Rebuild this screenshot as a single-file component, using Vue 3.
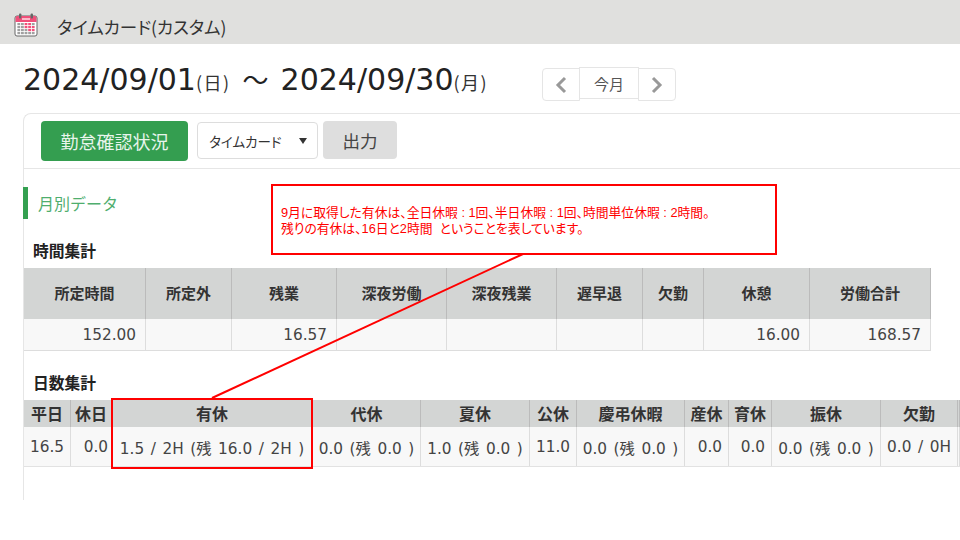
<script setup>
const timeCols = [
  { h: '所定時間', v: '152.00' }, { h: '所定外', v: '' }, { h: '残業', v: '16.57' },
  { h: '深夜労働', v: '' }, { h: '深夜残業', v: '' }, { h: '遅早退', v: '' },
  { h: '欠勤', v: '' }, { h: '休憩', v: '16.00' }, { h: '労働合計', v: '168.57' }
]
const dayCols = [
  { h: '平日', v: '16.5', cls: 'num' }, { h: '休日', v: '0.0', cls: 'num tight' },
  { h: '有休', v: '1.5 / 2H (残 16.0 / 2H )' }, { h: '代休', v: '0.0 (残 0.0 )' },
  { h: '夏休', v: '1.0 (残 0.0 )' }, { h: '公休', v: '11.0', cls: 'num' },
  { h: '慶弔休暇', v: '0.0 (残 0.0 )' }, { h: '産休', v: '0.0', cls: 'num' },
  { h: '育休', v: '0.0', cls: 'num' }, { h: '振休', v: '0.0 (残 0.0 )' },
  { h: '欠勤', v: '0.0 / 0H' }, { h: '', v: '' }
]
const calCells = [
  [0,0,1,1,0],[0,0,1,1,1],[0,0,0,1,1],[0,0,0,0,0]
]
</script>

<template>
  <div class="page">
    <header class="topbar">
      <svg class="cal" width="24" height="24" viewBox="0 0 24 24">
        <rect x="1" y="3" width="22" height="20" rx="2" fill="#fff" stroke="#666" stroke-width="1"/>
        <path d="M1.5 9V5a2 2 0 0 1 2-2h17a2 2 0 0 1 2 2v4z" fill="#f0507a"/>
        <rect x="5" y="0.5" width="2.4" height="5" rx="1" fill="#666"/>
        <rect x="16.6" y="0.5" width="2.4" height="5" rx="1" fill="#666"/>
        <rect x="8" y="5" width="8" height="2" fill="#fbb9c9"/>
        <template v-for="(row, r) in calCells" :key="r">
          <rect v-for="(c, i) in row" :key="i" :x="3.4 + i * 3.6" :y="10 + r * 3" width="2.8" height="2.2"
            :fill="c ? '#f0507a' : '#a0a0a0'"/>
        </template>
      </svg>
      <span class="apptitle">タイムカード(カスタム)</span>
    </header>

    <div class="range">
      <h1 class="dates">2024/09/01<small>(日)</small><span class="tilde">〜</span>2024/09/30<small>(月)</small></h1>
      <nav class="pager">
        <button class="pg side left" aria-label="前">
          <svg width="12" height="18" viewBox="0 0 12 18"><path d="M10 2 3 9l7 7" fill="none" stroke="#999" stroke-width="3"/></svg>
        </button>
        <button class="pg mid">今月</button>
        <button class="pg side right" aria-label="次">
          <svg width="12" height="18" viewBox="0 0 12 18"><path d="M2 2l7 7-7 7" fill="none" stroke="#999" stroke-width="3"/></svg>
        </button>
      </nav>
    </div>

    <section class="card">
      <div class="toolbar">
        <button class="btn-green">勤怠確認状況</button>
        <div class="select"><span>タイムカード</span><i class="caret"></i></div>
        <button class="btn-gray">出力</button>
      </div>

      <h2 class="section">月別データ</h2>

      <h3 class="sub first">時間集計</h3>
      <div class="grid time">
        <div v-for="c in timeCols" :key="c.h" class="th">{{ c.h }}</div>
        <div v-for="c in timeCols" :key="c.h + 'v'" class="td">{{ c.v }}</div>
      </div>

      <h3 class="sub second">日数集計</h3>
      <div class="grid days">
        <div v-for="(c, i) in dayCols" :key="i" class="th">{{ c.h }}</div>
        <div v-for="(c, i) in dayCols" :key="i + 'v'" class="td" :class="c.cls">{{ c.v }}</div>
      </div>
    </section>

    <svg class="leader" width="960" height="540" viewBox="0 0 960 540">
      <line x1="523" y1="254" x2="212" y2="398" stroke="#f00" stroke-width="2"/>
      <rect x="112" y="399" width="200" height="69" fill="none" stroke="#f00" stroke-width="2"/>
    </svg>
    <div class="note">
      <p>9月に取得した有休は、全日休暇 : 1回、半日休暇 : 1回、時間単位休暇 : 2時間。</p>
      <p>残りの有休は、16日と2時間&nbsp;&nbsp;ということを表しています。</p>
    </div>
  </div>
</template>

<style>
html, body { margin: 0; background: #fff; }
</style>

<style scoped>
.page {
  position: relative;
  width: 960px;
  height: 540px;
  overflow: hidden;
  background: #fff;
  color: #333;
  font-family: "DejaVu Sans", "Noto Sans CJK JP", sans-serif;
}
.topbar {
  height: 44px;
  background: #e0e0de;
  display: flex;
  align-items: center;
  padding-left: 14px;
  box-sizing: border-box;
}
.cal { flex: none; width: 24px; height: 24px; margin-top: 6px; }
.apptitle {
  margin-left: 19px;
  font: 400 17.5px "Noto Sans CJK JP", sans-serif;
  font-feature-settings: "palt";
  color: #333;
  padding-top: 8px;
}
.range {
  height: 69px;
  display: flex;
  align-items: flex-start;
  padding-left: 23px;
}
.dates {
  margin: 13px 0 0;
  font-size: 30px;
  line-height: 44px;
  font-weight: 400;
  color: #222;
  white-space: nowrap;
  width: 519px;
}
.dates small { font-size: 18px; color: #333; font-family: "Noto Sans CJK JP", sans-serif; letter-spacing: 1.5px; }
.tilde { font-family: "Noto Sans CJK JP", sans-serif; font-size: 26px; margin: 0 12px; }
.pager { display: flex; align-items: flex-start; margin-top: 23px; }
.pg {
  background: #fff;
  border: 1px solid #e5e5e5;
  padding: 0;
  display: flex;
  align-items: center;
  justify-content: center;
  box-sizing: border-box;
}
.side { width: 38px; height: 33px; margin-top: 1px; }
.left { border-radius: 4px 0 0 4px; }
.right { border-radius: 0 4px 4px 0; margin-left: -1px; }
.mid {
  width: 60px; height: 32px; margin-left: -1px;
  font: 400 15px "Noto Sans CJK JP", sans-serif; color: #555;
}
.card {
  margin-left: 23px;
  height: 387px;
  border-left: 1px solid #e6e6e6;
  border-top: 1px solid #e6e6e6;
  border-top-left-radius: 8px;
  box-sizing: border-box;
}
.toolbar {
  height: 55px;
  border-bottom: 1px solid #e6e6e6;
  display: flex;
  align-items: flex-start;
  padding: 7px 0 0 17px;
  box-sizing: border-box;
}
.btn-green {
  width: 147px; height: 40px;
  border: 0; border-radius: 4px;
  background: #349e50; color: #e8f5ec;
  font: 400 18px "Noto Sans CJK JP", sans-serif;
  padding: 0;
}
.select {
  width: 121px; height: 37px; margin-left: 9px; margin-top: 1px;
  border: 1px solid #ddd; border-radius: 4px;
  box-sizing: border-box;
  display: flex; align-items: center; justify-content: space-between;
  padding: 0 10px 0 11px;
  font: 400 13.5px "Noto Sans CJK JP", sans-serif;
  font-feature-settings: "palt";
  color: #333;
}
.caret {
  width: 0; height: 0;
  border-left: 4.5px solid transparent;
  border-right: 4.5px solid transparent;
  border-top: 6px solid #333;
}
.btn-gray {
  width: 74px; height: 38px; margin-left: 5px;
  border: 0; border-radius: 4px;
  background: #dedede; color: #444;
  font: 400 17.5px "Noto Sans CJK JP", sans-serif;
  padding: 0;
}
.section {
  margin: 18px 0 0 -1px;
  height: 32px;
  border-left: 5px solid #34a050;
  padding-left: 10px;
  font: 400 16px/32px "Noto Sans CJK JP", sans-serif;
  color: #4fae6e;
}
.sub {
  margin: 0 0 0 9px;
  font: 700 15.75px/20px "Noto Sans CJK JP", sans-serif;
  color: #222;
}
.first { margin-top: 22px; margin-bottom: 7px; }
.second { margin-top: 22px; margin-bottom: 7px; }
.grid { display: grid; }
.time {
  width: 907px;
  grid-template-columns: 122px 86px 105px 110px 110px 86px 61px 106px 121px;
  grid-template-rows: 51px 31px;
  border-bottom: 1px solid #ddd;
}
.days {
  width: 936px;
  grid-template-columns: 47px 41px 201px 108px 109px 47px 108px 44px 43px 109px 77px 2px;
  grid-template-rows: 27px 39px;
  border-bottom: 1px solid #e2e2e2;
}
.th {
  background: #d3d5d4;
  border-right: 1px solid #bbb;
  display: flex; align-items: center; justify-content: center;
  font: 700 15px "Noto Sans CJK JP", sans-serif;
  color: #333;
  padding-bottom: 2px;
  box-sizing: border-box;
  white-space: nowrap;
}
.days .th { font-size: 16px; padding-bottom: 1px; }
.td {
  background: #f8f8f8;
  border-right: 1px solid #ddd;
  display: flex; align-items: center; justify-content: flex-end;
  padding-right: 9px;
  font-size: 15.3px;
  color: #444;
  box-sizing: border-box;
  white-space: nowrap;
}
.days .td { padding-right: 0; padding-top: 1px; justify-content: center; word-spacing: 1.7px; }
.days .td.num { justify-content: flex-end; padding-right: 6px; }
.days .td.tight { padding-right: 3px; }
.leader { position: absolute; left: 0; top: 0; pointer-events: none; }
.note {
  position: absolute;
  left: 271px; top: 184px;
  width: 506px; height: 71px;
  box-sizing: border-box;
  border: 2px solid #f00;
  background: #fff;
  padding: 19px 0 0 8px;
  color: #f00;
  font: 400 12.8px/16px "Liberation Sans", "Noto Sans CJK JP", sans-serif;
  font-feature-settings: "palt";
}
.note p { margin: 0; white-space: nowrap; }
</style>
